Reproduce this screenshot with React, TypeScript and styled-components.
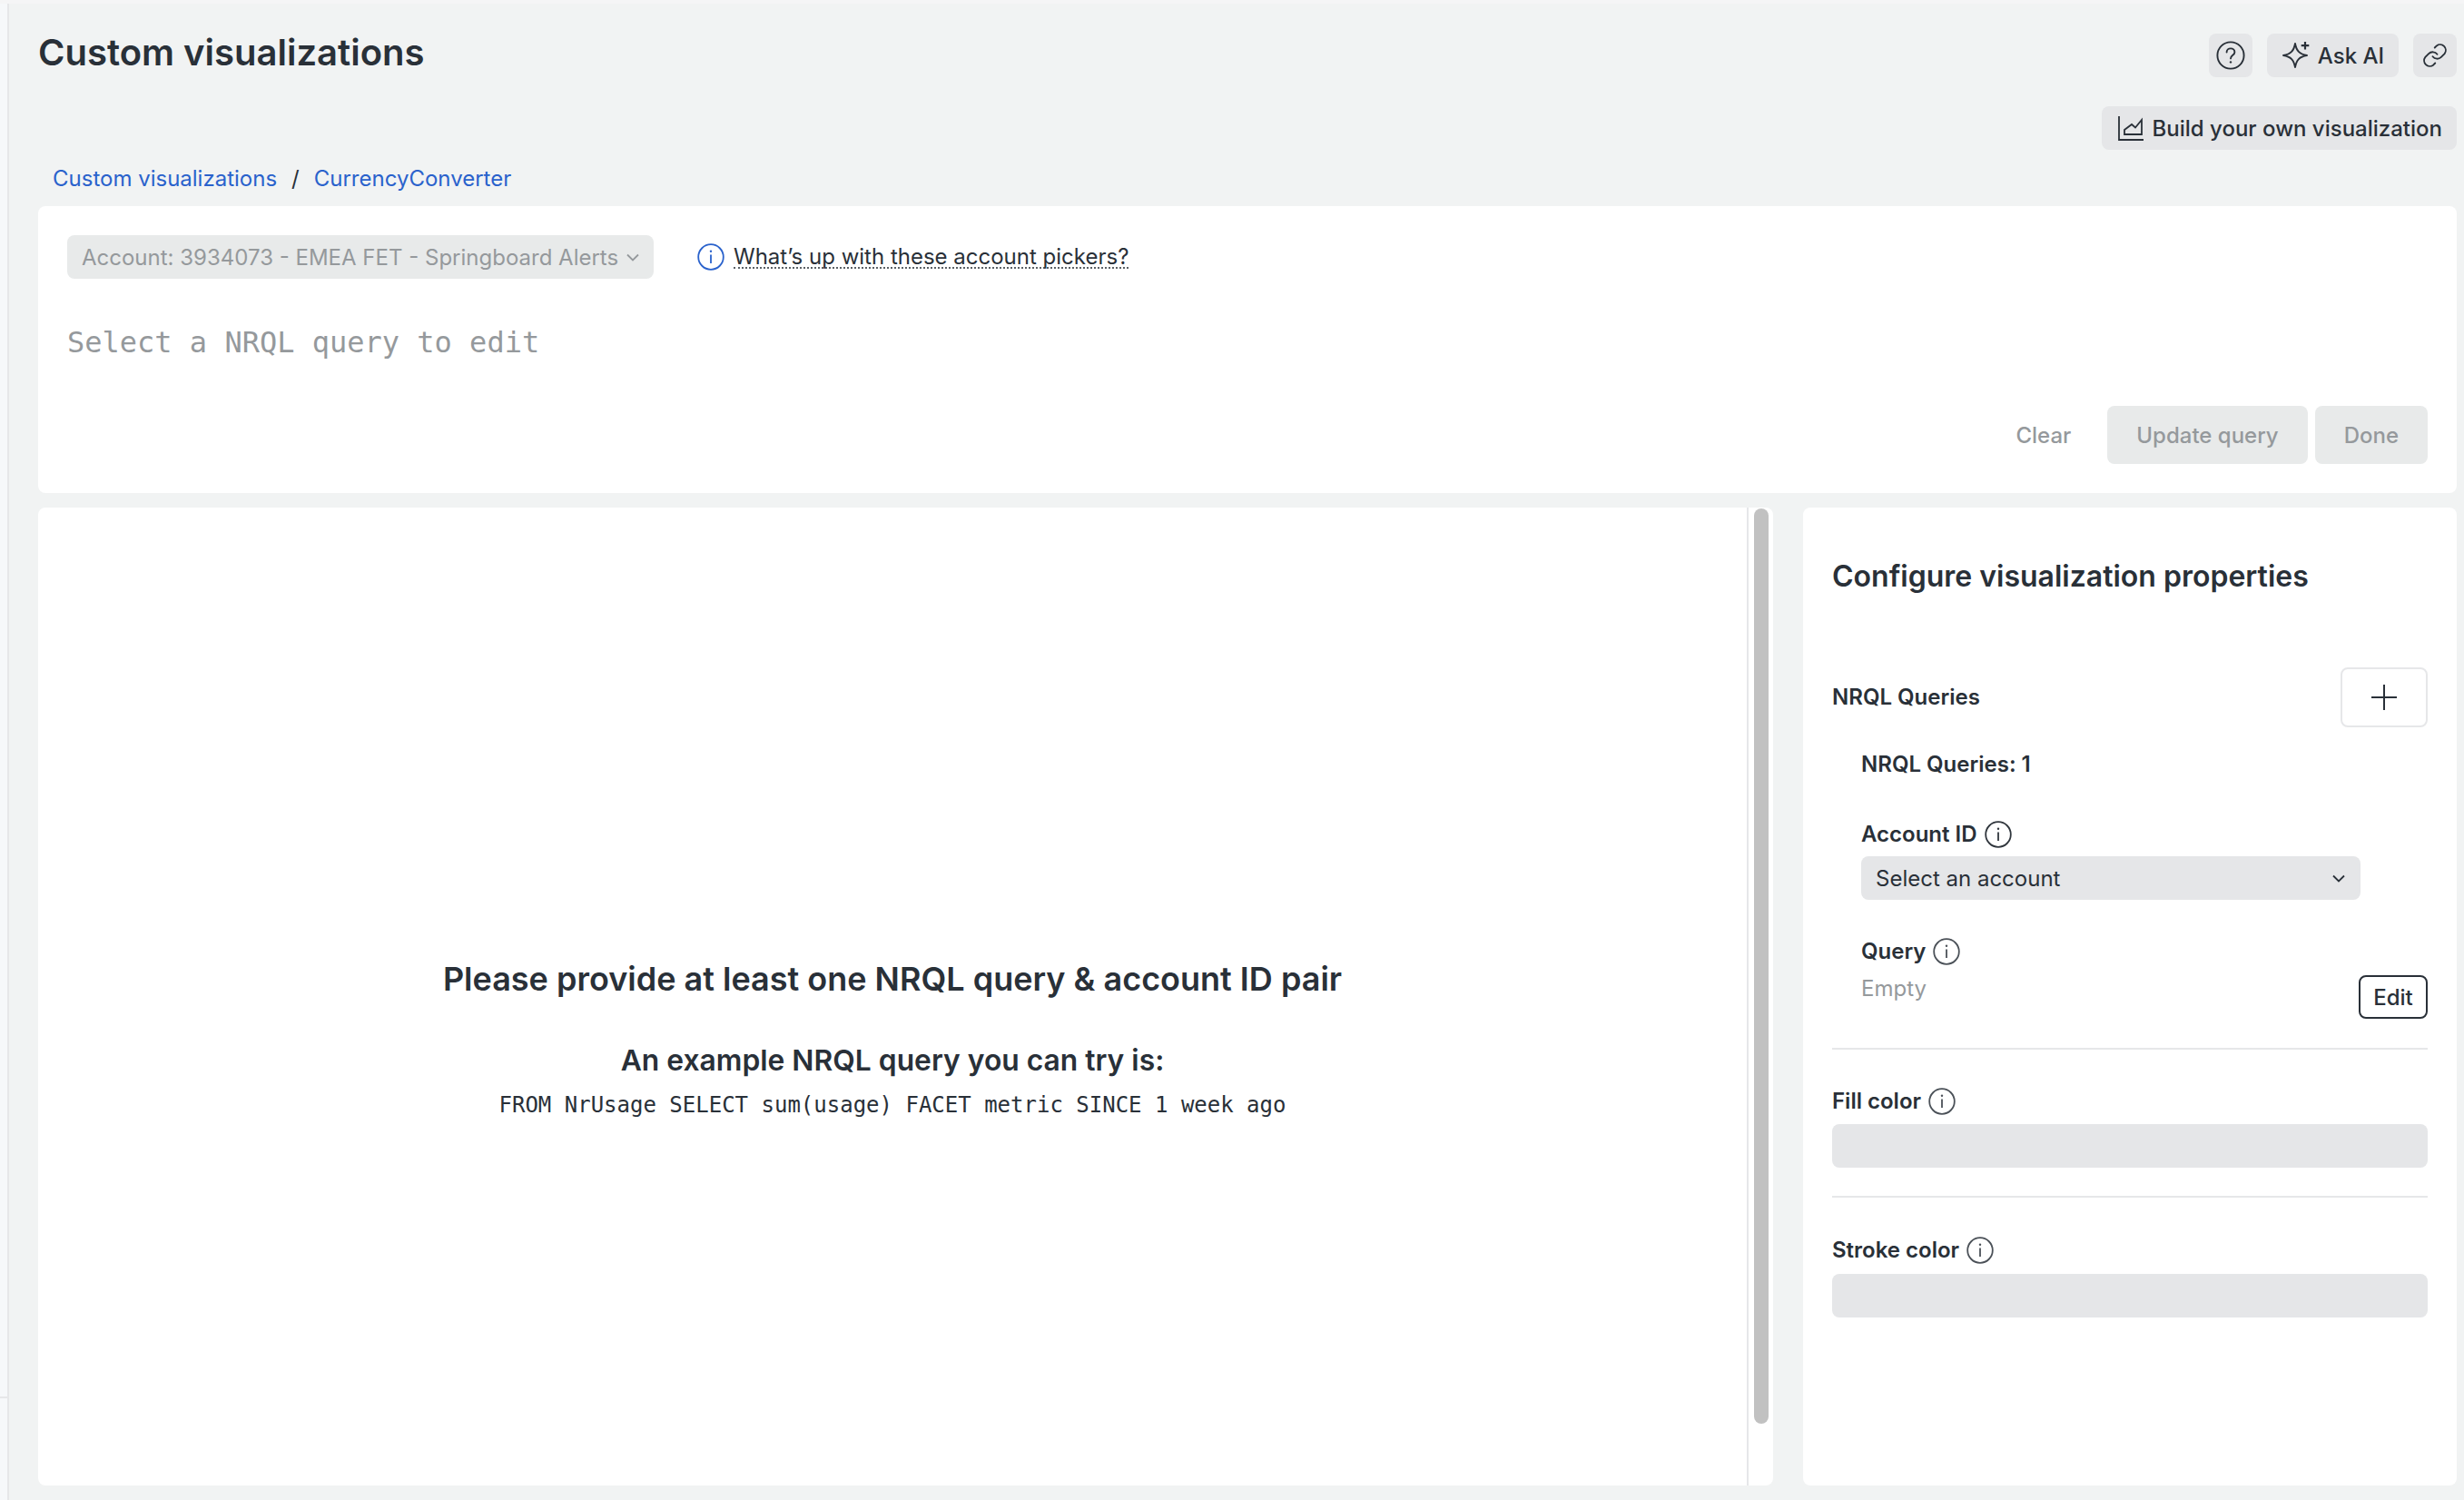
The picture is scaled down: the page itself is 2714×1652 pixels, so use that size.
import styled, { createGlobalStyle } from "styled-components";

const GlobalStyle = createGlobalStyle`
  html, body {
    margin: 0;
    padding: 0;
    background: #f1f3f3;
  }

  * {
    box-sizing: border-box;
  }
`;

const SANS = `Inter, "Noto Sans", "Liberation Sans", sans-serif`;
const MONO = `"DejaVu Sans Mono", "Liberation Mono", monospace`;
const INK = "#293038";
const MUTED = "#95999c";
const BLUE = "#2a62cc";

const HelpIcon = () => (
  <svg width="32" height="32" viewBox="0 0 32 32" fill="none" stroke="currentColor" strokeWidth="1.9">
    <circle cx="16" cy="16" r="14.6" />
    <path d="M11.6 12.6c0-2.6 2-4.2 4.4-4.2s4.4 1.600 4.400 4c0 3.400-4.400 3.400-4.400 7" strokeLinecap="round" />
    <circle cx="16" cy="23.4" r="1.2" fill="currentColor" stroke="none" />
  </svg>
);

const SparkleIcon = () => (
  <svg width="30" height="30" viewBox="0 0 30 30" fill="none" stroke="currentColor" strokeWidth="1.9">
    <path d="M14 2c1.400 7.800 4.600 11.600 13 13-8.400 1.400-11.600 5.200-13 13-1.400-7.800-4.600-11.600-13-13C9.400 13.600 12.600 9.800 14 2Z" strokeLinejoin="round" />
    <path d="M25 0v8.500M20.700 4.200h8.600" strokeWidth="2.200" />
  </svg>
);

const LinkIcon = () => (
  <svg width="30" height="30" viewBox="0 0 24 24" fill="none" stroke="currentColor" strokeWidth="1.500" strokeLinecap="round" strokeLinejoin="round">
    <path d="M10 13a5 5 0 0 0 7.500.500l3-3a5 5 0 0 0-7-7l-1.700 1.700" />
    <path d="M14 11a5 5 0 0 0-7.500-.500l-3 3a5 5 0 0 0 7 7l1.700-1.700" />
  </svg>
);

const ChartIcon = () => (
  <svg width="28" height="27" viewBox="0 0 28 27" fill="none" stroke="currentColor" strokeWidth="1.800">
    <path d="M1 0v26h27" />
    <path d="M7 20v-5l8-6 4 3.500L26 4v16Z" strokeLinejoin="miter" />
  </svg>
);

const InfoIcon = ({ color = "currentColor", size = 30 }: { color?: string; size?: number }) => (
  <svg width={size} height={size} viewBox="0 0 30 30" fill="none" stroke={color} strokeWidth="1.800">
    <circle cx="15" cy="15" r="13.800" />
    <path d="M15 12.500v9.500" />
    <circle cx="15" cy="8.800" r="1.200" fill={color} stroke="none" />
  </svg>
);

const Chevron = ({ color = "currentColor" }: { color?: string }) => (
  <svg width="14" height="9" viewBox="0 0 14 9" fill="none" stroke={color} strokeWidth="1.800">
    <path d="M1 1.500l6 6 6-6" />
  </svg>
);

const PlusIcon = () => (
  <svg width="30" height="30" viewBox="0 0 30 30" fill="none" stroke="currentColor" strokeWidth="2">
    <path d="M15 1v28M1 15h28" />
  </svg>
);

const App = () => {
  return (
    <Page>
      <GlobalStyle />
      <TopStrip />
      <Body>
        <SideStrip>
          <SideNotch />
        </SideStrip>
        <Main>
          <Header>
            <HeaderLeft>
              <Title>Custom visualizations</Title>
              <Breadcrumb>
                <Crumb>Custom visualizations</Crumb>
                <Slash>/</Slash>
                <Crumb>CurrencyConverter</Crumb>
              </Breadcrumb>
            </HeaderLeft>
            <HeaderRight>
              <ActionRow>
                <ToolButton $square>
                  <HelpIcon />
                </ToolButton>
                <AskButton>
                  <SparkleIcon />
                  Ask AI
                </AskButton>
                <ToolButton $square>
                  <LinkIcon />
                </ToolButton>
              </ActionRow>
              <ToolButton>
                <ChartIcon />
                Build your own visualization
              </ToolButton>
            </HeaderRight>
          </Header>

          <QueryCard>
            <PickerRow>
              <AccountPicker>
                Account: 3934073 - EMEA FET - Springboard Alerts
                <Chevron />
              </AccountPicker>
              <PickerHelp>
                <InfoIcon color={BLUE} />
                <HelpLink>What’s up with these account pickers?</HelpLink>
              </PickerHelp>
            </PickerRow>
            <QueryPlaceholder>Select a NRQL query to edit</QueryPlaceholder>
            <QueryActions>
              <ClearButton>Clear</ClearButton>
              <DisabledButton>Update query</DisabledButton>
              <DisabledButton>Done</DisabledButton>
            </QueryActions>
          </QueryCard>

          <Columns>
            <PreviewCard>
              <PreviewBody>
                <PreviewTitle>Please provide at least one NRQL query &amp; account ID pair</PreviewTitle>
                <PreviewSubtitle>An example NRQL query you can try is:</PreviewSubtitle>
                <PreviewCode>FROM NrUsage SELECT sum(usage) FACET metric SINCE 1 week ago</PreviewCode>
              </PreviewBody>
              <ScrollTrack>
                <ScrollThumb />
              </ScrollTrack>
            </PreviewCard>

            <ConfigCard>
              <ConfigTitle>Configure visualization properties</ConfigTitle>
              <QueriesRow>
                <FieldLabel>NRQL Queries</FieldLabel>
                <AddButton>
                  <PlusIcon />
                </AddButton>
              </QueriesRow>
              <QueryGroup>
                <FieldLabel>NRQL Queries: 1</FieldLabel>
                <GroupLabelRow>
                  <FieldLabel>Account ID</FieldLabel>
                  <InfoIcon color="#30363d" />
                </GroupLabelRow>
                <AccountSelect>
                  Select an account
                  <Chevron />
                </AccountSelect>
                <QueryLabelRow>
                  <FieldLabel>Query</FieldLabel>
                  <InfoIcon color="#4b5158" />
                </QueryLabelRow>
                <EmptyRow>
                  <EmptyText>Empty</EmptyText>
                  <EditButton>Edit</EditButton>
                </EmptyRow>
              </QueryGroup>
              <Divider $top={32} />
              <ColorLabelRow $top={42}>
                <FieldLabel>Fill color</FieldLabel>
                <InfoIcon color="#4b5158" />
              </ColorLabelRow>
              <ColorField $top={10} />
              <Divider $top={31} />
              <ColorLabelRow $top={43}>
                <FieldLabel>Stroke color</FieldLabel>
                <InfoIcon color="#4b5158" />
              </ColorLabelRow>
              <ColorField $top={11} />
            </ConfigCard>
          </Columns>
        </Main>
      </Body>
    </Page>
  );
};

export default App;

const Page = styled.div`
  display: flex;
  flex-direction: column;
  width: 2714px;
  height: 1652px;
  overflow: hidden;
  background: #f1f3f3;
  color: ${INK};
  font-family: ${SANS};
`;

const TopStrip = styled.div`
  flex: none;
  height: 4px;
  background: #f5f5f6;
`;

const Body = styled.div`
  display: flex;
  flex: 1;
  min-height: 0;
`;

const SideStrip = styled.div`
  flex: none;
  width: 10px;
  padding-top: 1534px;
  background: #f6f8fa;
  border-right: 2px solid #e6e7e9;
`;

const SideNotch = styled.div`
  height: 2px;
  background: #e6e7e9;
`;

const Main = styled.main`
  display: flex;
  flex: 1;
  flex-direction: column;
  min-width: 0;
  padding: 0 8px 16px 32px;
`;

const Header = styled.header`
  display: flex;
  flex: none;
  justify-content: space-between;
  height: 223px;
`;

const HeaderLeft = styled.div`
  padding-top: 30px;
`;

const Title = styled.h1`
  margin: 0;
  font-size: 40px;
  font-weight: 600;
  line-height: 48px;
  color: ${INK};
`;

const Breadcrumb = styled.nav`
  display: flex;
  align-items: center;
  gap: 16px;
  height: 30px;
  margin: 99px 0 0 16px;
  font-size: 24px;
`;

const Crumb = styled.span`
  color: ${BLUE};
`;

const Slash = styled.span`
  color: ${INK};
`;

const HeaderRight = styled.div`
  display: flex;
  flex-direction: column;
  align-items: flex-end;
  gap: 32px;
  padding-top: 33px;
`;

const ActionRow = styled.div`
  display: flex;
  gap: 16px;
`;

const ToolButton = styled.button<{ $square?: boolean }>`
  display: flex;
  align-items: center;
  justify-content: center;
  gap: ${({ $square }) => ($square ? 0 : "10px")};
  width: ${({ $square }) => ($square ? "48px" : "auto")};
  height: 48px;
  padding: ${({ $square }) => ($square ? 0 : "0 16px 0 18px")};
  border: 0;
  border-radius: 8px;
  background: #e5e6e8;
  color: ${INK};
  font-family: inherit;
  font-size: 24px;
  font-weight: 500;
`;

const AskButton = styled(ToolButton)`
  gap: 9px;
  padding: 0 16px 0 17px;
`;

const QueryCard = styled.section`
  flex: none;
  height: 316px;
  padding: 32px 32px 32px;
  border-radius: 8px;
  background: #fff;
`;

const PickerRow = styled.div`
  display: flex;
  align-items: center;
  gap: 48px;
`;

const AccountPicker = styled.div`
  display: flex;
  align-items: center;
  justify-content: space-between;
  width: 646px;
  height: 48px;
  padding: 0 16px;
  border-radius: 8px;
  background: #e8eaea;
  color: ${MUTED};
  font-size: 24px;
  white-space: nowrap;
`;

const PickerHelp = styled.div`
  display: flex;
  align-items: center;
  gap: 10px;
`;

const HelpLink = styled.span`
  margin-top: 2px;
  border-bottom: 2px dotted #5b6166;
  color: ${INK};
  font-size: 24px;
  line-height: 22px;
`;

const QueryPlaceholder = styled.div`
  height: 40px;
  margin-top: 50px;
  color: ${MUTED};
  font-family: ${MONO};
  font-size: 32px;
  line-height: 40px;
`;

const QueryActions = styled.div`
  display: flex;
  align-items: center;
  justify-content: flex-end;
  gap: 8px;
  margin-top: 50px;
`;

const ClearButton = styled.button`
  margin-right: 32px;
  padding: 0;
  border: 0;
  background: none;
  color: ${MUTED};
  font-family: inherit;
  font-size: 24px;
  font-weight: 500;
`;

const DisabledButton = styled.button`
  height: 64px;
  padding: 0 32px;
  border: 0;
  border-radius: 8px;
  background: #e8eaea;
  color: ${MUTED};
  font-family: inherit;
  font-size: 24px;
  font-weight: 500;
`;

const Columns = styled.div`
  display: flex;
  flex: 1;
  gap: 33px;
  min-height: 0;
  margin-top: 16px;
`;

const PreviewCard = styled.section`
  display: flex;
  flex: none;
  width: 1911px;
  overflow: hidden;
  border-radius: 8px;
  background: #fff;
`;

const PreviewBody = styled.div`
  display: flex;
  flex: 1;
  flex-direction: column;
  align-items: center;
  padding-top: 495px;
  border-right: 2px solid #e6e7e9;
`;

const PreviewTitle = styled.h2`
  margin: 0;
  font-size: 36px;
  font-weight: 600;
  line-height: 48px;
`;

const PreviewSubtitle = styled.h3`
  margin: 46px 0 0;
  font-size: 31.8px;
  font-weight: 600;
  line-height: 40px;
`;

const PreviewCode = styled.code`
  margin-top: 11px;
  font-family: ${MONO};
  font-size: 24px;
  line-height: 36px;
`;

const ScrollTrack = styled.div`
  flex: none;
  width: 27px;
  padding: 1px 5px 0 6px;
`;

const ScrollThumb = styled.div`
  height: 1008px;
  border-radius: 8px;
  background: #c1c1c1;
`;

const ConfigCard = styled.aside`
  flex: 1;
  padding: 56px 32px 0;
  border-radius: 8px;
  background: #fff;
`;

const ConfigTitle = styled.h2`
  margin: 0;
  font-size: 32px;
  font-weight: 600;
  line-height: 40px;
`;

const QueriesRow = styled.div`
  display: flex;
  align-items: center;
  justify-content: space-between;
  margin-top: 80px;
`;

const FieldLabel = styled.span`
  font-size: 24px;
  font-weight: 600;
  line-height: 30px;
`;

const AddButton = styled.button`
  display: flex;
  align-items: center;
  justify-content: center;
  width: 96px;
  height: 66px;
  padding: 0;
  border: 2px solid #e6e7e9;
  border-radius: 8px;
  background: #fff;
  color: ${INK};
`;

const QueryGroup = styled.div`
  display: flex;
  flex-direction: column;
  padding: 26px 0 0 32px;
`;

const LabelRow = styled.div`
  display: flex;
  align-items: center;
  gap: 8px;
  height: 30px;
`;

const GroupLabelRow = styled(LabelRow)`
  margin-top: 47px;
`;

const QueryLabelRow = styled(LabelRow)`
  margin-top: 42px;
`;

const AccountSelect = styled.div`
  display: flex;
  align-items: center;
  justify-content: space-between;
  width: 550px;
  height: 48px;
  margin-top: 9px;
  padding: 0 17px 0 16px;
  border-radius: 8px;
  background: #e5e6e8;
  font-size: 24px;
`;

const EmptyRow = styled.div`
  display: flex;
  align-items: flex-start;
  justify-content: space-between;
  margin-top: 11px;
`;

const EmptyText = styled.span`
  color: ${MUTED};
  font-size: 24px;
  line-height: 30px;
`;

const EditButton = styled.button`
  width: 76px;
  height: 48px;
  padding: 0;
  border: 2px solid ${INK};
  border-radius: 8px;
  background: #fff;
  color: ${INK};
  font-family: inherit;
  font-size: 24px;
  font-weight: 500;
`;

const Divider = styled.hr<{ $top: number }>`
  height: 2px;
  margin: ${({ $top }) => $top}px 0 0;
  border: 0;
  background: #e6e7e9;
`;

const ColorLabelRow = styled(LabelRow)<{ $top: number }>`
  margin-top: ${({ $top }) => $top}px;
`;

const ColorField = styled.div<{ $top: number }>`
  height: 48px;
  margin-top: ${({ $top }) => $top}px;
  border-radius: 8px;
  background: #e5e6e8;
`;
